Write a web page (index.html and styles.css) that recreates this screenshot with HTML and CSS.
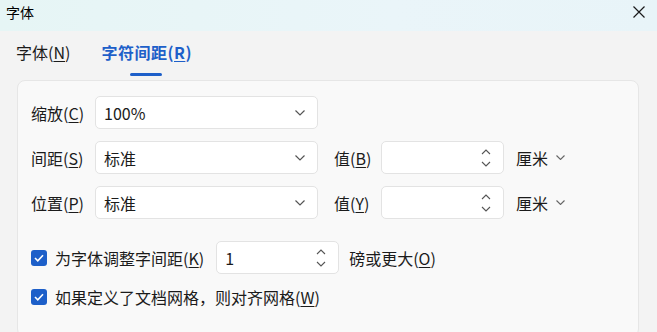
FILE: index.html
```html
<!DOCTYPE html>
<html lang="zh-CN">
<head>
    <meta charset="UTF-8">
    <meta name="viewport" content="width=device-width, initial-scale=1.0">
    <title>字体</title>
    <link rel="stylesheet" href="styles.css">
</head>
<body>
    <div class="titlebar">
        <span class="title">字体</span>
        <svg class="close" width="12" height="12" viewBox="0 0 12 12">
            <path d="M0.5 0.5 L11.5 11.5 M11.5 0.5 L0.5 11.5" stroke="#1a1a1a" stroke-width="1.2" fill="none"/>
        </svg>
    </div>

    <div class="tabs">
        <div class="tab">字体(<u>N</u>)</div>
        <div class="tab active">字符间距(<u>R</u>)</div>
    </div>

    <div class="panel">
        <div class="row">
            <span class="label">缩放(<u>C</u>)</span>
            <div class="select"><span>100%</span><svg class="chev" width="10" height="6" viewBox="0 0 10 6"><path d="M0.5 0.5 L5 5 L9.5 0.5" stroke="#555" stroke-width="1.2" fill="none"/></svg></div>
        </div>
        <div class="row">
            <span class="label">间距(<u>S</u>)</span>
            <div class="select"><span>标准</span><svg class="chev" width="10" height="6" viewBox="0 0 10 6"><path d="M0.5 0.5 L5 5 L9.5 0.5" stroke="#555" stroke-width="1.2" fill="none"/></svg></div>
            <span class="val-label">值(<u>B</u>)</span>
            <div class="spin"><span></span><svg class="arrows" width="10" height="18" viewBox="0 0 10 18"><path d="M1 5 L5 1 L9 5 M1 13 L5 17 L9 13" stroke="#555" stroke-width="1.1" fill="none"/></svg></div>
            <span class="unit">厘米</span>
            <svg class="unit-chev" width="9" height="5" viewBox="0 0 9 5"><path d="M0.5 0.5 L4.5 4.5 L8.5 0.5" stroke="#666" stroke-width="1.1" fill="none"/></svg>
        </div>
        <div class="row">
            <span class="label">位置(<u>P</u>)</span>
            <div class="select"><span>标准</span><svg class="chev" width="10" height="6" viewBox="0 0 10 6"><path d="M0.5 0.5 L5 5 L9.5 0.5" stroke="#555" stroke-width="1.2" fill="none"/></svg></div>
            <span class="val-label">值(<u>Y</u>)</span>
            <div class="spin"><span></span><svg class="arrows" width="10" height="18" viewBox="0 0 10 18"><path d="M1 5 L5 1 L9 5 M1 13 L5 17 L9 13" stroke="#555" stroke-width="1.1" fill="none"/></svg></div>
            <span class="unit">厘米</span>
            <svg class="unit-chev" width="9" height="5" viewBox="0 0 9 5"><path d="M0.5 0.5 L4.5 4.5 L8.5 0.5" stroke="#666" stroke-width="1.1" fill="none"/></svg>
        </div>

        <div class="check-row first">
            <span class="checkbox"><svg width="10" height="8" viewBox="0 0 10 8"><path d="M1 4 L3.8 6.8 L9 1.2" stroke="#fff" stroke-width="1.6" fill="none"/></svg></span>
            <span class="check-label">为字体调整字间距(<u>K</u>)</span>
            <div class="spin small"><span>1</span><svg class="arrows" width="10" height="18" viewBox="0 0 10 18"><path d="M1 5 L5 1 L9 5 M1 13 L5 17 L9 13" stroke="#555" stroke-width="1.1" fill="none"/></svg></div>
            <span class="unit">磅或更大(<u>O</u>)</span>
        </div>
        <div class="check-row">
            <span class="checkbox"><svg width="10" height="8" viewBox="0 0 10 8"><path d="M1 4 L3.8 6.8 L9 1.2" stroke="#fff" stroke-width="1.6" fill="none"/></svg></span>
            <span class="check-label">如果定义了文档网格，则对齐网格(<u>W</u>)</span>
        </div>
    </div>
</body>
</html>
```

FILE: styles.css
```css
body {
    margin: 0;
    height: 332px;
    background-color: #f3f3f3;
    font-family: "Segoe UI", "Noto Sans CJK SC", "Noto Sans", sans-serif;
    font-size: 16px;
    color: #1b1b1b;
    overflow: hidden;
}
u {
    text-decoration-thickness: 1px;
    text-underline-offset: 2px;
}
.titlebar {
    height: 31px;
    background: linear-gradient(90deg, #e6f5f5 0%, #eaf5f9 60%, #e8f4f8 100%);
    display: flex;
    justify-content: space-between;
    align-items: flex-start;
    padding: 0 12px 0 6px;
}
.title {
    font-size: 14px;
    line-height: 25px;
    color: #000;
}
.close {
    margin-top: 6px;
}
.tabs {
    height: 49px;
    display: flex;
    align-items: flex-start;
    padding-left: 16px;
    gap: 31px;
}
.tab {
    font-size: 16px;
    line-height: 22px;
    margin-top: 10px;
    color: #1b1b1b;
    position: relative;
}
.tab.active {
    color: #1d5fc9;
    font-weight: 600;
    letter-spacing: 0.5px;
}
.tab.active::after {
    content: "";
    position: absolute;
    left: 29px;
    top: 32px;
    width: 32px;
    height: 3px;
    border-radius: 2px;
    background-color: #1d5fc9;
}
.panel {
    margin: 0 18px 0 17px;
    height: 240px;
    background-color: #f9f9f9;
    border: 1px solid #e6e6e6;
    border-radius: 8px;
    padding: 15px 13px 0 13px;
}
.row {
    display: flex;
    align-items: center;
    height: 33px;
    margin-bottom: 12px;
}
.label {
    width: 64px;
}
.select, .spin {
    height: 31px;
    background-color: #fff;
    border: 1px solid #e3e3e3;
    border-radius: 5px;
    display: flex;
    align-items: center;
    justify-content: space-between;
    padding: 0 12px 0 8px;
}
.select {
    width: 201px;
}
.spin {
    width: 101px;
}
.val-label {
    margin-left: 16px;
    width: 47px;
}
.unit {
    margin-left: 12px;
}
.unit-chev {
    margin-left: 8px;
}
.check-row {
    display: flex;
    align-items: center;
    height: 24px;
    margin-top: 11px;
}
.check-row.first {
    height: 33px;
    margin-top: 22px;
}
.checkbox {
    width: 16px;
    height: 16px;
    border-radius: 3px;
    background-color: #1d5fc9;
    display: flex;
    align-items: center;
    justify-content: center;
}
.check-label {
    margin-left: 8px;
}
.spin.small {
    margin-left: 12px;
}
.check-row .unit {
    margin-left: 10px;
}
```
